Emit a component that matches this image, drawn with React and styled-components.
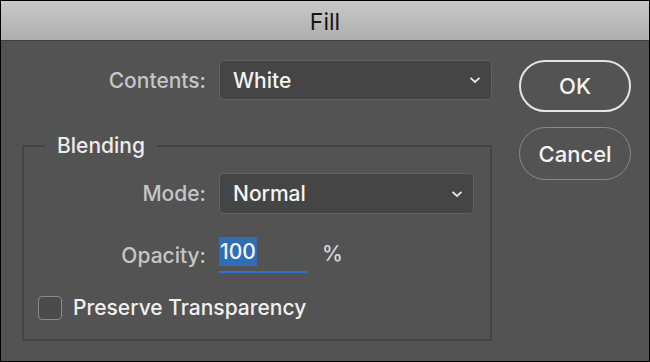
import React from "react";
import styled, { createGlobalStyle } from "styled-components";

const Global = createGlobalStyle`
  * { box-sizing: border-box; }
  html, body { margin: 0; padding: 0; background: #000; }
  body { font-family: Inter, "Noto Sans", sans-serif; }
`;

const Window = styled.div`
  width: 650px;
  height: 362px;
  border: 1px solid #000;
  background: #535353;
  display: flex;
  flex-direction: column;
  overflow: hidden;
`;

const TitleBar = styled.div`
  height: 40px;
  flex: none;
  background: linear-gradient(#c9c9c9, #aeaeae);
  border-bottom: 1px solid #3e3e3e;
  display: flex;
  align-items: center;
  justify-content: center;
  color: #161616;
  font-size: 23px;
  padding-top: 2px;
`;

const Body = styled.div`
  display: flex;
  align-items: flex-start;
  padding: 19px 18px 0 21px;
  gap: 27px;
`;

const LeftCol = styled.div`
  width: 471px;
  display: flex;
  flex-direction: column;
`;

const RightCol = styled.div`
  width: 112px;
  display: flex;
  flex-direction: column;
  gap: 15px;
`;

const Row = styled.div`
  display: flex;
  align-items: center;
  gap: 13px;
  margin-top: ${(p) => p.$mt || 0}px;
`;

const Label = styled.label`
  width: ${(p) => p.$w}px;
  text-align: right;
  color: #c6c6c6;
  font-size: 21px;
  font-weight: 500;
  flex: none;
`;

const Select = styled.div`
  width: ${(p) => p.$w}px;
  height: ${(p) => p.$h}px;
  background: #454545;
  border: 1px solid #626262;
  border-radius: 5px;
  display: flex;
  align-items: center;
  justify-content: space-between;
  padding: 0 10px 0 13px;
  color: #f4f4f4;
  font-size: 21px;
  font-weight: 500;
`;

const Group = styled.section`
  margin-top: 45px;
  padding: 0 0 19px 0;
  border: 2px solid #444444;
  display: flex;
  flex-direction: column;
  align-items: flex-start;
`;

const Legend = styled.div`
  margin: -13px 0 15px 21px;
  padding: 0 12px;
  background: #535353;
  color: #ececec;
  font-size: 21px;
  font-weight: 500;
  line-height: 24px;
`;

const OpacityInput = styled.div`
  width: 88px;
  height: 36px;
  border-bottom: 2px solid #2b74d6;
  display: flex;
  align-items: flex-start;
`;

const Selected = styled.span`
  background: #2f6db4;
  color: #f4f4f4;
  font-size: 21px;
  font-weight: 500;
  line-height: 29px;
  padding: 0 1px;
`;

const Unit = styled.span`
  color: #d8d8d8;
  font-size: 21px;
  font-weight: 500;
  margin-left: 2px;
  margin-bottom: 4px;
`;

const CheckRow = styled.label`
  display: flex;
  align-items: center;
  gap: 11px;
  margin: 22px 0 0 14px;
  color: #f0f0f0;
  font-size: 21px;
  font-weight: 500;
  line-height: 25px;
`;

const Box = styled.span`
  width: 24px;
  height: 24px;
  border: 1.5px solid #8b8b8b;
  border-radius: 4px;
  background: #4a4a4a;
  flex: none;
`;

const Button = styled.button`
  height: ${(p) => p.$h}px;
  border-radius: 27px;
  background: transparent;
  border: ${(p) => (p.$primary ? "2px solid #e4e4e4" : "1.5px solid #8a8a8a")};
  color: #f4f4f4;
  font-family: inherit;
  font-size: 22px;
  font-weight: 500;
  padding: 0;
`;

const Chevron = () => (
  <svg width="12" height="8" viewBox="0 0 12 8">
    <path d="M1.5 1.8 L6 6 L10.5 1.8" fill="none" stroke="#e8e8e8" strokeWidth="1.8" />
  </svg>
);

export default function App() {
  return (
    <>
      <Global />
      <Window>
        <TitleBar>Fill</TitleBar>
        <Body>
          <LeftCol>
            <Row>
              <Label $w={184}>Contents:</Label>
              <Select $w={273} $h={40}>
                <span>White</span>
                <Chevron />
              </Select>
            </Row>
            <Group>
              <Legend>Blending</Legend>
              <Row>
                <Label $w={182}>Mode:</Label>
                <Select $w={255} $h={41}>
                  <span>Normal</span>
                  <Chevron />
                </Select>
              </Row>
              <Row $mt={23}>
                <Label $w={182}>Opacity:</Label>
                <OpacityInput>
                  <Selected>100</Selected>
                </OpacityInput>
                <Unit>%</Unit>
              </Row>
              <CheckRow>
                <Box />
                Preserve Transparency
              </CheckRow>
            </Group>
          </LeftCol>
          <RightCol>
            <Button $primary $h={52}>OK</Button>
            <Button $h={53}>Cancel</Button>
          </RightCol>
        </Body>
      </Window>
    </>
  );
}
